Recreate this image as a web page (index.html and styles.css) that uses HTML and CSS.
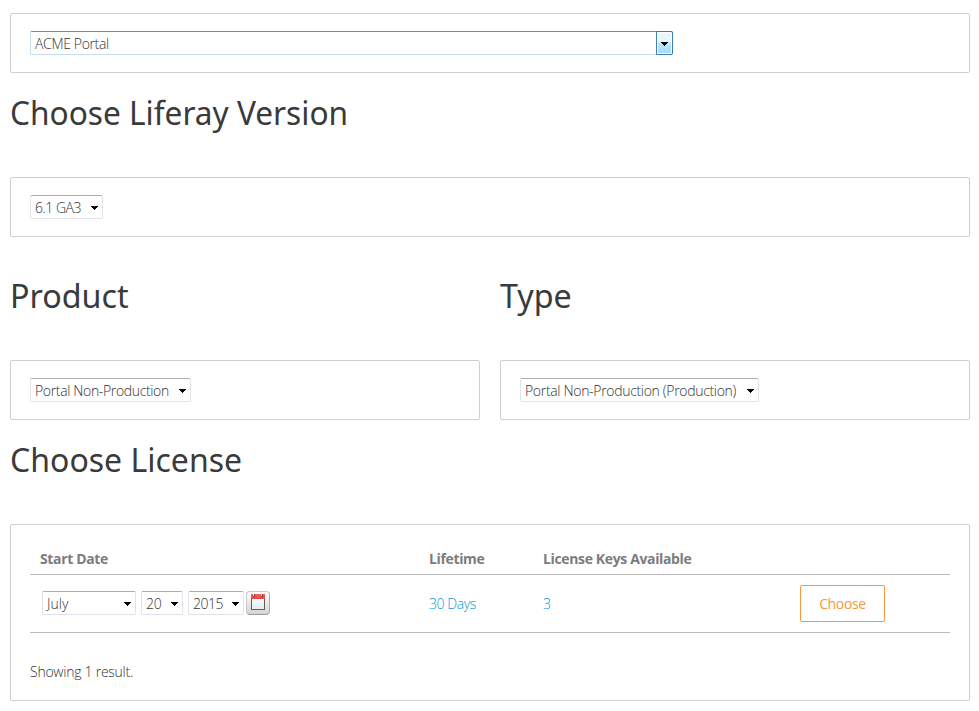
FILE: index.html
```html
<!DOCTYPE html>
<html lang="en">
<head>
<meta charset="utf-8">
<title>Choose License</title>
<link rel="stylesheet" href="styles.css">
</head>
<body>
<main class="page">
  <section class="panel">
    <div class="select select-active"><span>ACME Portal</span><i class="drop"><svg class="arrow" viewBox="0 0 7 4"><path d="M0 0h7v1H6v1H5v1H4v1H3V3H2V2H1V1H0z"/></svg></i></div>
  </section>
  <h2><span class="h-version">Choose Liferay Version</span></h2>
  <section class="panel">
    <div class="select w-version"><span>6.1 GA3</span><svg class="arrow" viewBox="0 0 7 4"><path d="M0 0h7v1H6v1H5v1H4v1H3V3H2V2H1V1H0z"/></svg></div>
  </section>
  <div class="columns">
    <div>
      <h2 class="spaced"><span class="h-product">Product</span></h2>
      <section class="panel">
        <div class="select w-product"><span>Portal Non-Production</span><svg class="arrow" viewBox="0 0 7 4"><path d="M0 0h7v1H6v1H5v1H4v1H3V3H2V2H1V1H0z"/></svg></div>
      </section>
    </div>
    <div>
      <h2 class="spaced"><span class="h-product">Type</span></h2>
      <section class="panel">
        <div class="select w-type"><span>Portal Non-Production (Production)</span><svg class="arrow" viewBox="0 0 7 4"><path d="M0 0h7v1H6v1H5v1H4v1H3V3H2V2H1V1H0z"/></svg></div>
      </section>
    </div>
  </div>
  <h2><span class="h-license">Choose License</span></h2>
  <section class="panel results">
    <div class="row head">
      <span>Start Date</span><span>Lifetime</span><span>License Keys Available</span>
    </div>
    <div class="row body">
      <div class="date">
        <div class="select w-month"><span>July</span><svg class="arrow" viewBox="0 0 7 4"><path d="M0 0h7v1H6v1H5v1H4v1H3V3H2V2H1V1H0z"/></svg></div>
        <div class="select w-day"><span>20</span><svg class="arrow" viewBox="0 0 7 4"><path d="M0 0h7v1H6v1H5v1H4v1H3V3H2V2H1V1H0z"/></svg></div>
        <div class="select w-year"><span>2015</span><svg class="arrow" viewBox="0 0 7 4"><path d="M0 0h7v1H6v1H5v1H4v1H3V3H2V2H1V1H0z"/></svg></div>
        <div class="calendar">
          <svg width="16" height="17" viewBox="0 0 16 17">
            <defs>
              <linearGradient id="sheet" x1="0" y1="0" x2="0" y2="1"><stop offset="0" stop-color="#fff"/><stop offset="1" stop-color="#dfeeee"/></linearGradient>
              <linearGradient id="red" x1="0" y1="0" x2="0" y2="1"><stop offset="0" stop-color="#f4605c"/><stop offset="1" stop-color="#ee4444"/></linearGradient>
            </defs>
            <rect x="1.5" y="3.5" width="13" height="13" fill="url(#sheet)" stroke="#6b5a5a"/>
            <path d="M1 1h14v5H1z" fill="url(#red)"/>
            <path d="M3 1h2v3H3zM11 1h2v3h-2z" fill="#8c3a3a"/>
            <path d="M3 0h1v3H3zM11 0h1v3h-1z" fill="#f3d9d6"/>
          </svg>
        </div>
      </div>
      <a>30 Days</a><a>3</a><div><span class="button">Choose</span></div>
    </div>
    <p>Showing 1 result.</p>
  </section>
</main>
</body>
</html>
```
FILE: styles.css
```css
* { box-sizing: border-box; }
body {
  margin: 0;
  background: #fff;
  color: #333;
  font: 300 14px/20px "Open Sans", "Noto Sans", sans-serif;
  letter-spacing: -.35px;
}
.page { padding: 13px 9px 0 10px; }
h2 {
  margin: 0;
  height: 104px;
  padding-top: 16px;
  color: #3a3a3a;
  font: 400 33px/48px "Noto Sans", "Open Sans", sans-serif;
  letter-spacing: 0;
  white-space: nowrap;
}
h2.spaced { height: 123px; padding-top: 35px; }
h2 span { display: inline-block; transform-origin: 0 50%; }
.h-version { transform: scaleX(.958); }
.h-product { transform: scaleX(.978); }
.h-license { transform: scaleX(.97); }
.panel {
  height: 60px;
  padding: 17px 19px;
  border: 1px solid #cfcfcf;
  border-radius: 2px;
}
.columns { display: grid; grid-template-columns: 1fr 1fr; gap: 20px; }
.select {
  display: flex;
  align-items: center;
  justify-content: space-between;
  height: 24px;
  padding: 2px 4px 0;
  border: 1px solid #e2e3ea;
  border-top-color: #abadb3;
  border-radius: 2px;
  white-space: nowrap;
}
.arrow { display: block; width: 7px; height: 4px; fill: #000; }
.select-active {
  width: 643px;
  padding: 0 0 0 4px;
  border-color: #5794bf #3c7fb1 #c5dff0 #c5dff0;
}
.select-active > span { padding-top: 2px; }
.drop {
  display: flex;
  align-items: center;
  justify-content: center;
  width: 17px;
  height: 24px;
  margin: -1px -1px -1px 0;
  padding-top: 2px;
  border: 1px solid #3c7fb1;
  border-radius: 0 2px 2px 0;
  background: linear-gradient(#eaf6fd 0 45%, #bee6fd 50%, #a7d9f5);
  box-shadow: inset 0 0 0 1px #fff;
}
.w-version { width: 73px; letter-spacing: -.5px; }
.w-product { width: 161px; }
.w-type { width: 239px; letter-spacing: -.32px; }
.w-month { width: 94px; letter-spacing: 0; }
.w-day { width: 42px; margin-left: 5px; }
.w-year { width: 56px; margin-left: 5px; letter-spacing: -.5px; }
.results { height: 177px; padding: 15px 19px; }
.row {
  display: grid;
  grid-template-columns: 389px 114px 257px 1fr;
  align-items: center;
  padding-left: 10px;
  border-bottom: 1px solid #bbb;
}
.head {
  height: 35px;
  padding-top: 4px;
  color: #7c7c7c;
  font-weight: 700;
  letter-spacing: -.36px;
  white-space: nowrap;
}
.body { height: 58px; }
.row a { color: #009ae5; letter-spacing: -.45px; }
.date { display: flex; padding: 0 0 2px 2px; }
.calendar {
  display: grid;
  place-items: center;
  width: 24px;
  height: 24px;
  margin-left: 2px;
  padding-bottom: 2px;
  border: 1px solid #c8c8c8;
  border-bottom-color: #9a9a9a;
  border-right-color: #adadad;
  border-radius: 4px;
  background: linear-gradient(#fff, #d4d4d4);
}
.button {
  display: flex;
  align-items: center;
  justify-content: center;
  width: 85px;
  height: 37px;
  border: 1px solid #f7983a;
  border-radius: 2px;
  color: #f7983a;
  font-weight: 400;
}
p { margin: 29px 0 0; letter-spacing: -.25px; }
```
